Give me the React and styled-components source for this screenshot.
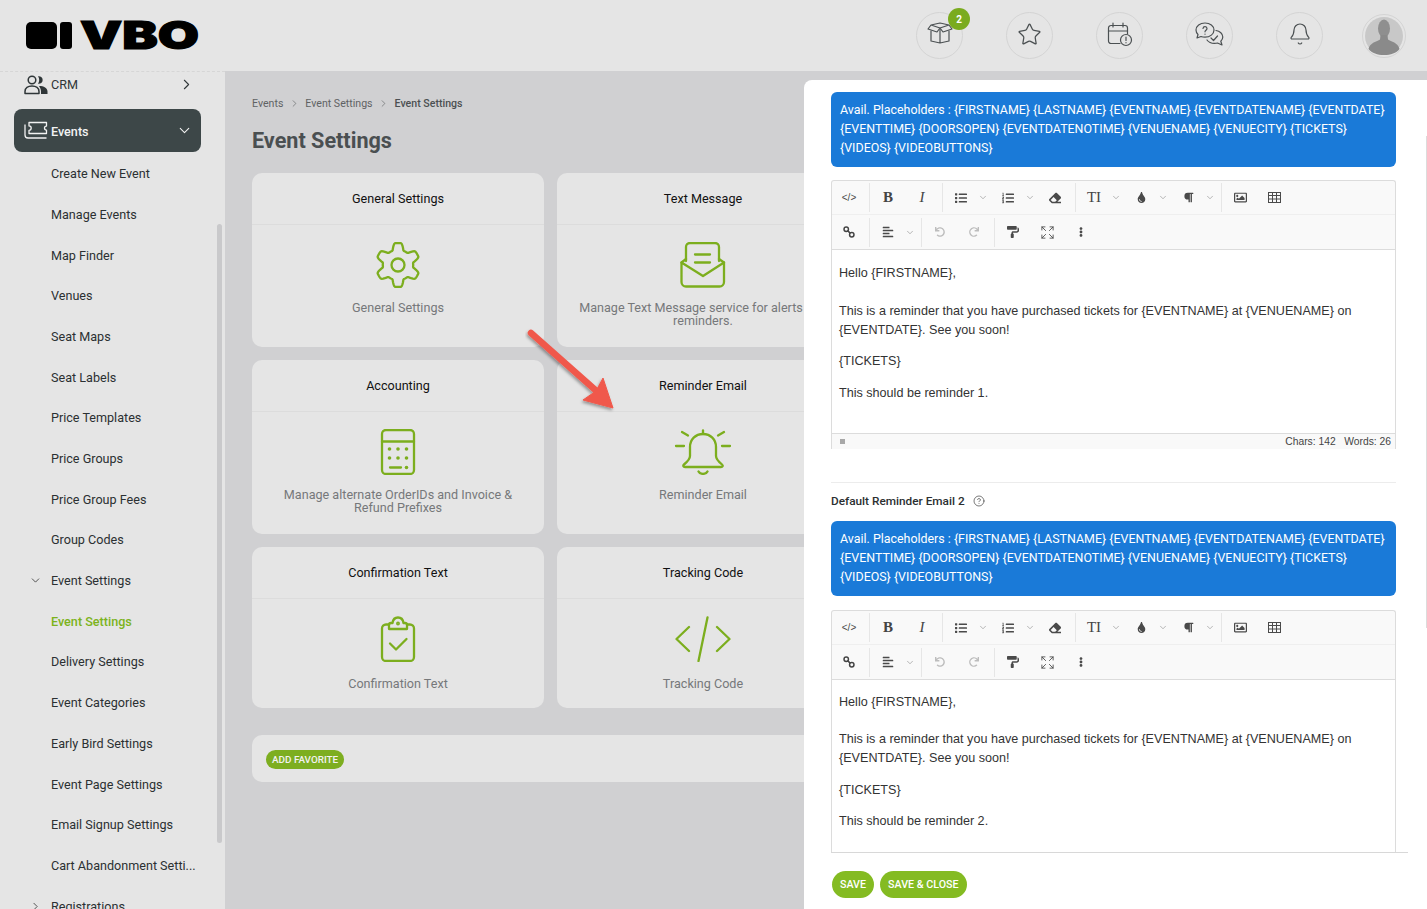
import React from "react";
import styled, { createGlobalStyle } from "styled-components";
import {
  Bell,
  ChevronDown,
  ChevronRight,
  CircleHelp,
  Expand,
  Star,
} from "lucide-react";
import {
  FaAlignLeft,
  FaEllipsisV,
  FaEraser,
  FaList,
  FaListOl,
  FaPaintRoller,
  FaParagraph,
  FaRedo,
  FaRegImage,
  FaTint,
  FaUndo,
} from "react-icons/fa";

const GREEN = "#7cae1e";
const PLACEHOLDERS =
  "Avail. Placeholders : {FIRSTNAME} {LASTNAME} {EVENTNAME} {EVENTDATENAME} {EVENTDATE} {EVENTTIME} {DOORSOPEN} {EVENTDATENOTIME} {VENUENAME} {VENUECITY} {TICKETS} {VIDEOS} {VIDEOBUTTONS}";

const menuItems = [
  "Create New Event",
  "Manage Events",
  "Map Finder",
  "Venues",
  "Seat Maps",
  "Seat Labels",
  "Price Templates",
  "Price Groups",
  "Price Group Fees",
  "Group Codes",
];

const settingsItems = [
  "Delivery Settings",
  "Event Categories",
  "Early Bird Settings",
  "Event Page Settings",
  "Email Signup Settings",
  "Cart Abandonment Setti...",
];

// six lobed gear outline, sampled so the teeth stay soft
const gearPoints = Array.from({ length: 144 }, (_, i) => {
  const a = (i / 144) * Math.PI * 2;
  const wave = Math.max(-1, Math.min(1, 1.7 * Math.cos(6 * a)));
  const r = 18.6 + 3.4 * wave;
  return `${(23 + r * Math.sin(a)).toFixed(2)},${(23 - r * Math.cos(a)).toFixed(2)}`;
}).join(" ");

function GearIcon() {
  return (
    <BigSvg width="46" height="46" viewBox="0 0 46 46">
      <polygon points={gearPoints} />
      <circle cx="23" cy="23" r="6.5" />
    </BigSvg>
  );
}

function MailIcon() {
  return (
    <BigSvg width="46" height="46" viewBox="0 0 46 46">
      <path d="M6 19V5a4 4 0 0 1 4-4h25a4 4 0 0 1 4 4v14" />
      <path d="M1.5 20.5 6 17M44 20.5 39 17" />
      <path d="M1.5 20.5V40a4.5 4.5 0 0 0 4.5 4.5h33.500a4.500 4.500 0 0 0 4.500-4.500V20.500L23 34z" />
      <path d="M15 12.500h15M15 20.500h15" />
    </BigSvg>
  );
}

function CalculatorIcon() {
  return (
    <BigSvg width="46" height="46" viewBox="0 0 46 46">
      <rect x="7" y="1" width="32" height="44" rx="4" />
      <path d="M7 12.500h32M15 38.500h11" />
      <g fill={GREEN} stroke="none">
        <circle cx="14.500" cy="20" r="1.800" />
        <circle cx="23" cy="20" r="1.800" />
        <circle cx="31.500" cy="20" r="1.800" />
        <circle cx="14.500" cy="29" r="1.800" />
        <circle cx="23" cy="29" r="1.800" />
        <circle cx="31.500" cy="29" r="1.800" />
        <circle cx="31.500" cy="38.500" r="1.800" />
      </g>
    </BigSvg>
  );
}

function RingingBellIcon() {
  return (
    <BigSvg width="58" height="46" viewBox="0 0 58 46">
      <path d="M29 1.500v3.500" />
      <path d="M29 5c-7.500 0-13 5.500-13 13v9c0 3.500-3 6-6 8.500-1.500 1.300-.6 2.500 1 2.500h36c1.600 0 2.500-1.200 1-2.500-3-2.500-6-5-6-8.500v-9c0-7.500-5.500-13-13-13z" />
      <path d="M24.500 42.500c1.500 3.200 7.500 3.200 9 0" />
      <path d="M2 17h8M48 17h8M8 3l6 3.500M50 3l-6 3.500" />
    </BigSvg>
  );
}

function ClipboardIcon() {
  return (
    <BigSvg width="46" height="46" viewBox="0 0 46 46">
      <path d="M14 8.500h-3a4 4 0 0 0-4 4V41a4 4 0 0 0 4 4h24a4 4 0 0 0 4-4V12.500a4 4 0 0 0-4-4h-3" />
      <path d="M14 13V9a2 2 0 0 1 2-2h1.500C18 3.500 20 1.500 23 1.500S28 3.500 28.500 7H30a2 2 0 0 1 2 2v4z" />
      <path d="M15 27.500l6 6 10.500-10.500" />
      <circle cx="23" cy="7.500" r=".8" />
    </BigSvg>
  );
}

function CodeIcon() {
  return (
    <BigSvg width="58" height="46" viewBox="0 0 58 46">
      <path d="M15 11 2.500 23 15 35M43 11l12.500 12L43 35M33.500 1.500 24.500 45" />
    </BigSvg>
  );
}

function BoxIcon() {
  return (
    <BoxSvg width="26" height="22" viewBox="0 0 26 22">
      <path d="M4 9v10l9 2 9-2V9M13 7v14" />
      <path d="M13 6 4 3 1 7l9 3 3-4 3 4 9-3-3-4-9 3M4 3l9-2 9 2" />
    </BoxSvg>
  );
}

function CalendarAlertIcon() {
  return (
    <TopSvg width="26" height="25" viewBox="0 0 26 25">
      <path d="M13 21.500H4a2.500 2.500 0 0 1-2.500-2.500V6A2.500 2.500 0 0 1 4 3.500h14A2.500 2.500 0 0 1 20.500 6v6" />
      <path d="M1.500 9h19M6 1v4M16 1v4" />
      <circle cx="19" cy="18" r="5.500" />
      <path d="M19 15v3.500M19 20.500v.3" />
    </TopSvg>
  );
}

function ChatIcon() {
  return (
    <TopSvg width="29" height="24" viewBox="0 0 29 24">
      <path d="M10 1C5 1 1 4 1 8c0 1.700.7 3.300 2 4.500L2 16l4-1.500c1.200.5 2.600.7 4 .7 5 0 9-3.200 9-7.200S15 1 10 1z" />
      <path d="M21 8.500c3.800.6 6.800 3.300 6.800 6.500 0 1.600-.7 3-2 4.200l1.200 3.800-4.500-2c-1 .3-2 .4-3 .4-3.200 0-6-1.300-7.500-3.400" />
      <path d="M8 6.500c.3-2.500 4-2.300 4 0 0 1.800-2 1.600-2 3.300M10 12v.2M16 16l2.500 2.500 4-4.500" />
    </TopSvg>
  );
}

function PeopleIcon() {
  return (
    <svg width="24" height="20" viewBox="0 0 24 20">
      <circle cx="8" cy="5" r="3.800" fill="none" stroke="#2f3638" strokeWidth="1.500" />
      <path d="M1 18.500v-2C1 13 4 11 8 11s7 2 7 5.500v2z" fill="none" stroke="#2f3638" strokeWidth="1.500" strokeLinejoin="round" />
      <path d="M14 1.300a3.800 3.800 0 1 1 0 7.400c1.600-2 1.600-5.400 0-7.400zM15 11c5 0 8.500 2 8.500 5.500v2.500h-6.500v-2.500c0-2-1-4-2-5.500z" fill="#2f3638" />
    </svg>
  );
}

function TicketsIcon() {
  return (
    <svg width="24" height="20" viewBox="0 0 24 20" fill="none" stroke="#f2f2f2" strokeWidth="1.300" strokeLinejoin="round">
      <path d="M5 1.500h17.500v3.600a2 2 0 0 0 0 4v3.400H5V9.300a2.200 2.200 0 0 0 0-4.400z" />
      <path d="M1 3.500V14a3 3 0 0 0 3 3h18.500" />
    </svg>
  );
}

function LinkIcon() {
  return (
    <svg width="12" height="12" viewBox="0 0 13 13" fill="none" stroke="#444" strokeWidth="1.600">
      <circle cx="3.500" cy="3.500" r="2.400" />
      <circle cx="9.500" cy="9.500" r="2.400" />
      <path d="M5 5l3 3" />
    </svg>
  );
}

function GridIcon() {
  return (
    <svg width="13" height="11" viewBox="0 0 13 11" fill="none" stroke="#4a4a4a" strokeWidth="1">
      <rect x=".5" y=".5" width="12" height="10" />
      <path d="M.5 3.500h12M.5 7h12M4.500 .5v10M8.500 .5v10" />
    </svg>
  );
}

function Arrow() {
  return (
    <ArrowSvg width="100" height="90" viewBox="0 0 100 90">
      <defs>
        <filter id="arrow-shadow" x="-20%" y="-20%" width="150%" height="150%">
          <feDropShadow dx="-1" dy="2" stdDeviation="1.800" floodColor="#000" floodOpacity="0.35" />
        </filter>
      </defs>
      <g filter="url(#arrow-shadow)">
        <path d="M6 6 76 68" stroke="#f0594c" strokeWidth="6.500" strokeLinecap="round" />
        <path d="M88 81 58 73 71 64 78 51z" fill="#f0594c" stroke="#f0594c" strokeWidth="1" strokeLinejoin="round" />
      </g>
    </ArrowSvg>
  );
}

function Caret() {
  return (
    <CaretCell>
      <ChevronDown size={11} strokeWidth={1.300} color="#7d7d7d" />
    </CaretCell>
  );
}

function ToolbarRows() {
  return (
    <>
      <ToolRow>
        <ToolBtn>
          <CodeGlyph>&lt;/&gt;</CodeGlyph>
        </ToolBtn>
        <ToolSep />
        <ToolBtn>
          <SerifGlyph $bold>B</SerifGlyph>
        </ToolBtn>
        <ToolBtn>
          <SerifGlyph $italic>I</SerifGlyph>
        </ToolBtn>
        <ToolSep />
        <DropBtn>
          <DropIcon>
            <FaList size={12} />
          </DropIcon>
          <Caret />
        </DropBtn>
        <DropBtn>
          <DropIcon>
            <FaListOl size={12} />
          </DropIcon>
          <Caret />
        </DropBtn>
        <ToolBtn>
          <FaEraser size={12} />
        </ToolBtn>
        <ToolSep />
        <DropBtn>
          <DropIcon>
            <SerifGlyph>TI</SerifGlyph>
          </DropIcon>
          <Caret />
        </DropBtn>
        <DropBtn>
          <DropIcon>
            <FaTint size={11} />
          </DropIcon>
          <Caret />
        </DropBtn>
        <DropBtn>
          <DropIcon>
            <FaParagraph size={11} />
          </DropIcon>
          <Caret />
        </DropBtn>
        <ToolSep />
        <ToolBtn>
          <FaRegImage size={13} />
        </ToolBtn>
        <ToolBtn>
          <GridIcon />
        </ToolBtn>
      </ToolRow>
      <ToolRow $last>
        <ToolBtn>
          <LinkIcon />
        </ToolBtn>
        <ToolSep />
        <DropBtn>
          <DropIcon>
            <FaAlignLeft size={12} />
          </DropIcon>
          <Caret />
        </DropBtn>
        <ToolSep />
        <ToolBtn $muted>
          <FaUndo size={10} />
        </ToolBtn>
        <ToolBtn $muted>
          <FaRedo size={10} />
        </ToolBtn>
        <ToolSep />
        <ToolBtn>
          <FaPaintRoller size={12} />
        </ToolBtn>
        <ToolBtn>
          <Expand size={15} strokeWidth={1.400} />
        </ToolBtn>
        <ToolBtn>
          <FaEllipsisV size={10} />
        </ToolBtn>
      </ToolRow>
    </>
  );
}

function EditorText({ reminder, $tall }) {
  return (
    <EditorBody $tall={$tall}>
      <p>Hello {"{FIRSTNAME}"},</p>
      <p>
        This is a reminder that you have purchased tickets for {"{EVENTNAME}"} at {"{VENUENAME}"} on {"{EVENTDATE}"}. See you soon!
      </p>
      <p>{"{TICKETS}"}</p>
      <p>This should be reminder {reminder}.</p>
    </EditorBody>
  );
}

function SettingCard({ title, text, icon, low }) {
  return (
    <Card>
      <CardTitle>{title}</CardTitle>
      <CardBody $low={low}>
        <IconSlot $low={low}>{icon}</IconSlot>
        <CardText>{text}</CardText>
      </CardBody>
    </Card>
  );
}

export default function App() {
  return (
    <Page>
      <GlobalStyle />
      <Header>
        <Logo>
          <LogoMark />
          <LogoBar />
          <svg width="128" height="50" viewBox="0 0 128 50">
            <text
              x="1"
              y="38.500"
              textLength="119"
              lengthAdjust="spacingAndGlyphs"
              fontFamily="Inter, 'DejaVu Sans', sans-serif"
              fontWeight="900"
              fontSize="38"
              fill="#000"
              stroke="#000"
              strokeWidth="1.200"
            >
              VBO
            </text>
          </svg>
        </Logo>
        <TopIcons>
          <RoundBtn>
            <BoxIcon />
            <Badge>2</Badge>
          </RoundBtn>
          <RoundBtn>
            <Star size={25} strokeWidth={1.200} color="#4b5052" />
          </RoundBtn>
          <RoundBtn>
            <CalendarAlertIcon />
          </RoundBtn>
          <RoundBtn>
            <ChatIcon />
          </RoundBtn>
          <RoundBtn>
            <Bell size={24} strokeWidth={1.200} color="#4b5052" />
          </RoundBtn>
          <Avatar>
            <svg width="38" height="38" viewBox="0 0 38 38">
              <circle cx="19" cy="19" r="19" fill="#c8c8c8" />
              <ellipse cx="19" cy="11.500" rx="6" ry="9" fill="#8f8f8f" />
              <path d="M15.500 18h7l.5 4.500c3 2 10 3 11.500 9.500-3 4-9 6-15.500 6s-12-2-15.500-6C5 25.500 12 24.500 15 22.500z" fill="#8a8a8a" />
            </svg>
          </Avatar>
        </TopIcons>
      </Header>

      <Layout>
        <Sidebar>
          <CrmRow>
            <RowIcon>
              <PeopleIcon />
            </RowIcon>
            <span>CRM</span>
            <RowChevron $inset={6}>
              <ChevronRight size={17} strokeWidth={1.500} color="#2f3638" />
            </RowChevron>
          </CrmRow>
          <ActiveRow>
            <RowIcon>
              <TicketsIcon />
            </RowIcon>
            <ActiveLabel>Events</ActiveLabel>
            <RowChevron $inset={8}>
              <ChevronDown size={17} strokeWidth={1.500} color="#f2f2f2" />
            </RowChevron>
          </ActiveRow>
          {menuItems.map((item) => (
            <MenuItem key={item}>{item}</MenuItem>
          ))}
          <MenuItem>
            <TreeToggle>
              <ChevronDown size={13} strokeWidth={1.500} color="#333" />
            </TreeToggle>
            Event Settings
          </MenuItem>
          <MenuItem $active>Event Settings</MenuItem>
          {settingsItems.map((item) => (
            <MenuItem key={item}>{item}</MenuItem>
          ))}
          <MenuItem>
            <TreeToggle>
              <ChevronRight size={13} strokeWidth={1.500} color="#333" />
            </TreeToggle>
            Registrations
          </MenuItem>
          <SideThumb />
        </Sidebar>

        <Main>
          <Crumbs>
            <span>Events</span>
            <ChevronRight size={11} strokeWidth={1.400} />
            <span>Event Settings</span>
            <ChevronRight size={11} strokeWidth={1.400} />
            <CrumbNow>Event Settings</CrumbNow>
          </Crumbs>
          <PageTitle>Event Settings</PageTitle>
          <CardGrid>
            <SettingCard title="General Settings" text="General Settings" icon={<GearIcon />} />
            <SettingCard
              title="Text Message"
              text="Manage Text Message service for alerts and reminders."
              icon={<MailIcon />}
            />
            <SettingCard
              title="Accounting"
              text="Manage alternate OrderIDs and Invoice & Refund Prefixes"
              icon={<CalculatorIcon />}
            />
            <SettingCard title="Reminder Email" text="Reminder Email" icon={<RingingBellIcon />} />
            <SettingCard title="Confirmation Text" text="Confirmation Text" icon={<ClipboardIcon />} low />
            <SettingCard title="Tracking Code" text="Tracking Code" icon={<CodeIcon />} low />
          </CardGrid>
          <FavoritePanel>
            <FavoriteBtn>ADD FAVORITE</FavoriteBtn>
          </FavoritePanel>
        </Main>
      </Layout>

      <Arrow />

      <Drawer>
        <Banner>{PLACEHOLDERS}</Banner>
        <Editor>
          <ToolbarRows />
          <EditorText reminder={1} />
          <StatusBar>
            <StatusDot />
            <span>Chars: 142&nbsp;&nbsp;&nbsp;Words: 26</span>
          </StatusBar>
        </Editor>
        <Divider />
        <FieldLabel>
          Default Reminder Email 2
          <CircleHelp size={12} strokeWidth={1.300} color="#333" />
        </FieldLabel>
        <Banner>{PLACEHOLDERS}</Banner>
        <ScrollClip>
          <Editor>
            <ToolbarRows />
            <EditorText reminder={2} $tall />
          </Editor>
        </ScrollClip>
        <Actions>
          <SaveBtn>SAVE</SaveBtn>
          <SaveBtn>SAVE &amp; CLOSE</SaveBtn>
        </Actions>
        <DrawerTrack />
      </Drawer>
    </Page>
  );
}

const GlobalStyle = createGlobalStyle`
  html, body {
    margin: 0;
    padding: 0;
    height: 100%;
    overflow: hidden;
    font-family: Roboto, "Liberation Sans", sans-serif;
  }
  * {
    box-sizing: border-box;
  }
`;

const Page = styled.div`
  position: relative;
  height: 909px;
  overflow: hidden;
  background: #d0d0d2;
`;

const Header = styled.header`
  height: 71px;
  background: #e5e5e5;
  display: flex;
  align-items: center;
  justify-content: space-between;
  padding: 0 21px 0 26px;
`;

const Logo = styled.div`
  display: flex;
  align-items: center;
  margin-top: -1px;
`;

const LogoMark = styled.div`
  width: 31px;
  height: 27px;
  background: #000;
  border-radius: 5px;
`;

const LogoBar = styled.div`
  width: 12px;
  height: 27px;
  margin: 0 7px 0 3px;
  background: #000;
  border-radius: 3px;
`;

const TopIcons = styled.div`
  display: flex;
  align-items: center;
`;

const RoundBtn = styled.div`
  position: relative;
  width: 47px;
  height: 47px;
  margin-right: 43px;
  padding-bottom: 3px;
  border: 1px solid #d4d4d4;
  border-radius: 50%;
  display: flex;
  align-items: center;
  justify-content: center;

  &:nth-child(5) {
    margin-right: 39px;
  }
`;

const Badge = styled.span`
  position: absolute;
  top: -5px;
  right: -8px;
  width: 22px;
  height: 22px;
  border-radius: 50%;
  background: #7aab1f;
  color: #fff;
  font-size: 10px;
  font-weight: 700;
  display: flex;
  align-items: center;
  justify-content: center;
`;

const Avatar = styled.div`
  width: 44px;
  height: 44px;
  border: 1px solid #d4d4d4;
  border-radius: 50%;
  display: flex;
  align-items: center;
  justify-content: center;
  overflow: hidden;
`;

const TopSvg = styled.svg`
  fill: none;
  stroke: #4b5052;
  stroke-width: 1.200;
  stroke-linecap: round;
  stroke-linejoin: round;
`;

const BoxSvg = styled(TopSvg)`
  margin-top: -3px;
`;

const Layout = styled.div`
  display: flex;
  height: 838px;
`;

const Sidebar = styled.aside`
  position: relative;
  flex: 0 0 225px;
  background: #e5e5e5;
  border-top: 1px dashed #d6d6d6;
  padding: 0 24px 0 14px;
  overflow: hidden;
`;

const SideThumb = styled.div`
  position: absolute;
  left: 217px;
  top: 152px;
  width: 5px;
  height: 619px;
  border-radius: 3px;
  background: #c9c9cb;
`;

const CrmRow = styled.div`
  height: 25px;
  margin-bottom: 12px;
  padding-left: 10px;
  display: flex;
  align-items: center;
  font-size: 12.600px;
  color: #2f3638;
`;

const ActiveRow = styled(CrmRow)`
  height: 43px;
  margin: 0 0 1.400px;
  background: #3d4748;
  border-radius: 8px;
  color: #f2f2f2;
  font-weight: 500;
`;

const ActiveLabel = styled.span`
  padding-top: 2px;
`;

const RowIcon = styled.span`
  width: 27px;
  display: flex;
  align-items: center;
`;

const RowChevron = styled.span`
  margin-left: auto;
  margin-right: ${(p) => p.$inset}px;
  display: flex;
`;

const MenuItem = styled.div`
  position: relative;
  height: 40.700px;
  padding-left: 37px;
  display: flex;
  align-items: center;
  font-size: 12.600px;
  white-space: nowrap;
  color: ${(p) => (p.$active ? "#7cb31c" : "#2b3032")};
  font-weight: ${(p) => (p.$active ? 500 : 400)};
`;

const TreeToggle = styled.span`
  position: absolute;
  left: 15px;
  display: flex;
`;

const Main = styled.main`
  flex: 1;
  min-width: 0;
  overflow: hidden;
  padding: 26px 27px;
`;

const Crumbs = styled.div`
  display: flex;
  align-items: center;
  gap: 5.500px;
  height: 13px;
  font-size: 10.600px;
  color: #5f6264;
`;

const CrumbNow = styled.span`
  color: #4c5052;
  font-weight: 500;
`;

const PageTitle = styled.h1`
  margin: 17px 0 19px;
  font-size: 21.600px;
  line-height: 27px;
  font-weight: 700;
  color: #4a4f51;
`;

const CardGrid = styled.div`
  display: grid;
  grid-template-columns: 292px 292px;
  gap: 13.500px 13px;
`;

const Card = styled.section`
  background: #e5e5e5;
  border-radius: 10px;
  overflow: hidden;
`;

const CardTitle = styled.div`
  height: 52px;
  border-bottom: 1px solid #dcdcdc;
  display: flex;
  align-items: center;
  justify-content: center;
  font-size: 12.600px;
  color: #111;
`;

const CardBody = styled.div`
  padding: 17px 20px ${(p) => (p.$low ? "18px" : "19.500px")};
  text-align: center;
`;

const IconSlot = styled.div`
  height: 46px;
  margin-bottom: ${(p) => (p.$low ? "14.500px" : "13px")};
  display: flex;
  justify-content: center;
`;

const BigSvg = styled.svg`
  fill: none;
  stroke: ${GREEN};
  stroke-width: 2.300;
  stroke-linecap: round;
  stroke-linejoin: round;
`;

const CardText = styled.div`
  font-size: 12.600px;
  line-height: 13px;
  min-height: 13px;
  color: #76787a;
`;

const FavoritePanel = styled.div`
  width: 900px;
  height: 47px;
  margin-top: 27px;
  padding: 15px 14px;
  display: flex;
  align-items: flex-start;
  background: #e5e5e5;
  border-radius: 10px;
`;

const FavoriteBtn = styled.div`
  display: inline-flex;
  align-items: center;
  height: 19px;
  padding: 0 6px;
  border-radius: 10px;
  background: #7dae20;
  color: #f2f2f2;
  font-size: 9.900px;
  font-weight: 500;
`;

const ArrowSvg = styled.svg`
  position: absolute;
  left: 525px;
  top: 327px;
`;

const Drawer = styled.aside`
  position: absolute;
  left: 804px;
  top: 80px;
  right: 0;
  bottom: 0;
  padding: 12px 31px 0 27px;
  background: #fff;
  border-top-left-radius: 8px;
  overflow: hidden;
`;

const DrawerTrack = styled.div`
  position: absolute;
  right: 0;
  top: 56px;
  width: 1px;
  height: 492px;
  background: #dcdcdc;
`;

const Banner = styled.div`
  padding: 8px 9px 10px;
  background: #1a7ad8;
  border-radius: 6px;
  color: #fff;
  font-size: 12.430px;
  line-height: 19px;
`;

const Editor = styled.div`
  margin-top: 13px;
  border: 1px solid #dcdcdc;
  border-bottom: none;
  border-radius: 3px 3px 0 0;
  overflow: hidden;
  background: #f9f9f9;
`;

const ScrollClip = styled.div`
  margin-right: -12px;
  padding-right: 12px;
  margin-top: 14px;
  border-bottom: 1px solid #d8d8d8;

  ${Editor} {
    margin-top: 0;
  }
`;

const ToolRow = styled.div`
  height: ${(p) => (p.$last ? "35px" : "34px")};
  display: flex;
  align-items: center;
  border-bottom: 1px solid ${(p) => (p.$last ? "#dcdcdc" : "#efefef")};
  color: #4a4a4a;
`;

const ToolBtn = styled.div`
  width: 34px;
  display: flex;
  align-items: center;
  justify-content: center;
  color: ${(p) => (p.$muted ? "#bdbdbd" : "#4a4a4a")};
`;

const ToolSep = styled.div`
  width: 1px;
  height: 29px;
  margin: 0 1px 0 3px;
  background: #e6e6e6;
`;

const DropBtn = styled.div`
  width: 47px;
  display: flex;
  align-items: center;
`;

const DropIcon = styled.span`
  width: 34px;
  display: flex;
  justify-content: center;
  align-items: center;
`;

const CaretCell = styled.span`
  width: 10px;
  display: flex;
  justify-content: center;
`;

const CodeGlyph = styled.span`
  font-size: 10px;
  font-family: "Liberation Sans", sans-serif;
  color: #4a4a4a;
`;

const SerifGlyph = styled.span`
  font-family: "Liberation Serif", serif;
  font-size: 15px;
  font-weight: ${(p) => (p.$bold ? 700 : 400)};
  font-style: ${(p) => (p.$italic ? "italic" : "normal")};
  color: #444;
`;

const EditorBody = styled.div`
  height: ${(p) => (p.$tall ? "172px" : "183px")};
  padding: ${(p) => (p.$tall ? "13px" : "13.500px")} 7px 0;
  background: #fff;
  font-family: "Liberation Sans", Arial, sans-serif;
  font-size: 12.600px;
  line-height: 19px;
  color: #333;

  p {
    margin: 0 0 12.500px;
  }

  p:first-child {
    margin-bottom: ${(p) => (p.$tall ? "18px" : "19px")};
  }
`;

const StatusBar = styled.div`
  height: 16px;
  padding: 0 4px 0 8px;
  background: #f9f9f9;
  border-top: 1px solid #dcdcdc;
  display: flex;
  align-items: center;
  justify-content: space-between;
  font-family: "Liberation Sans", Arial, sans-serif;
  font-size: 10.300px;
  color: #444;
`;

const StatusDot = styled.span`
  width: 5px;
  height: 5px;
  background: #a8a8a8;
`;

const Divider = styled.div`
  height: 1px;
  margin-top: 33px;
  background: #ececec;
`;

const FieldLabel = styled.div`
  height: 38px;
  padding-bottom: 2px;
  display: flex;
  align-items: center;
  gap: 8px;
  font-size: 11.800px;
  font-weight: 500;
  color: #2b2f31;
`;

const Actions = styled.div`
  display: flex;
  gap: 6px;
  margin: 18px 0 0 1px;
`;

const SaveBtn = styled.div`
  height: 27px;
  padding: 0 8px;
  border-radius: 14px;
  background: #84bb22;
  color: #fff;
  font-size: 10.700px;
  font-weight: 500;
  display: flex;
  align-items: center;
`;
